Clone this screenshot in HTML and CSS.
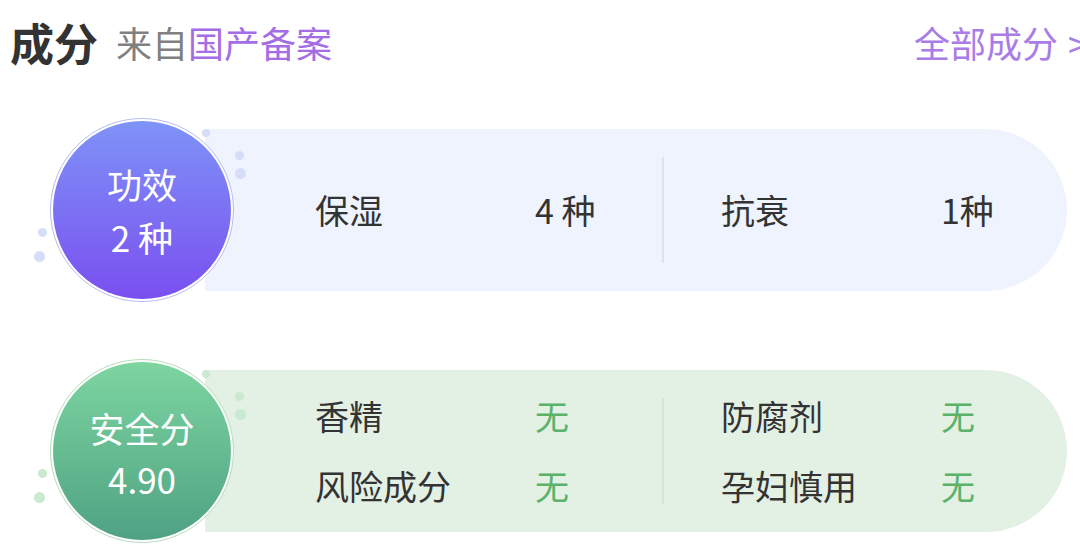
FILE: index.html
```html
<!DOCTYPE html>
<html lang="zh-CN">
<head>
    <meta charset="UTF-8">
    <meta name="viewport" content="width=device-width, initial-scale=1.0">
    <title>成分</title>
    <link rel="stylesheet" href="styles.css">
</head>
<body>

    <!-- Header -->
    <div class="header">
        <div class="title">
            <span class="title-main">成分</span>
            <span class="title-sub">来自<span class="purple">国产备案</span></span>
        </div>
        <a class="all-link">全部成分 <span class="arrow">&gt;</span></a>
    </div>

    <!-- Effect card -->
    <div class="card blue">
        <div class="dots">
            <i class="dot d1"></i><i class="dot d2"></i><i class="dot d3"></i>
            <i class="dot d4"></i><i class="dot d5"></i>
        </div>
        <div class="circle">
            <div class="circle-inner">
                <div>功效</div>
                <div>2 种</div>
            </div>
        </div>
        <div class="pill">
            <div class="col">
                <div class="row"><span class="label">保湿</span><span class="value">4 种</span></div>
            </div>
            <div class="divider"></div>
            <div class="col col-right">
                <div class="row"><span class="label">抗衰</span><span class="value">1种</span></div>
            </div>
        </div>
    </div>

    <!-- Safety card -->
    <div class="card green">
        <div class="dots">
            <i class="dot d1"></i><i class="dot d2"></i><i class="dot d3"></i>
            <i class="dot d4"></i><i class="dot d5"></i>
        </div>
        <div class="circle">
            <div class="circle-inner">
                <div>安全分</div>
                <div>4.90</div>
            </div>
        </div>
        <div class="pill">
            <div class="col">
                <div class="row"><span class="label">香精</span><span class="value ok">无</span></div>
                <div class="row"><span class="label">风险成分</span><span class="value ok">无</span></div>
            </div>
            <div class="divider"></div>
            <div class="col col-right">
                <div class="row"><span class="label">防腐剂</span><span class="value ok">无</span></div>
                <div class="row"><span class="label">孕妇慎用</span><span class="value ok">无</span></div>
            </div>
        </div>
    </div>

</body>
</html>
```

FILE: styles.css
```css
body {
    margin: 0;
    background: #ffffff;
    font-family: "Noto Sans CJK SC", "Noto Sans", sans-serif;
    color: #333333;
    overflow: hidden;
}

.header {
    display: flex;
    justify-content: space-between;
    align-items: center;
    height: 84px;
    padding-left: 10px;
    margin-right: -8px;
}

.title {
    display: flex;
    align-items: center;
    gap: 18px;
}

.title-main {
    font-size: 44px;
    font-weight: 700;
    color: #333333;
}

.title-sub {
    font-size: 36px;
    color: #808080;
}

.purple {
    color: #a46de6;
}

.all-link {
    font-size: 36px;
    color: #a97ce8;
}

.arrow {
    margin-left: 2px;
}

/* cards */
.card {
    position: relative;
    display: flex;
    align-items: center;
    margin-left: 50px;
    margin-top: 34px;
}

.card.green {
    margin-top: 57px;
}

.circle {
    position: relative;
    z-index: 2;
    flex: none;
    width: 184px;
    height: 184px;
    border-radius: 50%;
    border: 1px solid #b7bdf2;
    background: #ffffff;
    padding: 2px;
    box-sizing: border-box;
    display: flex;
}

.circle-inner {
    flex: 1;
    border-radius: 50%;
    background: linear-gradient(180deg, #7e93f7 0%, #7a4ff0 100%);
    color: #ffffff;
    font-size: 35px;
    line-height: 53px;
    display: flex;
    flex-direction: column;
    align-items: center;
    justify-content: center;
}

.green .circle {
    border-color: #b6ddb9;
}

.green .circle-inner {
    background: linear-gradient(180deg, #7dd5a0 0%, #4fa283 100%);
    line-height: 51px;
    padding-top: 4px;
}

.pill {
    flex: none;
    width: 862px;
    height: 162px;
    margin-left: -29px;
    border-radius: 0 81px 81px 0;
    background: #eef3fe;
    display: flex;
    align-items: center;
    padding-left: 110px;
    box-sizing: border-box;
    font-size: 34px;
}

.green .pill {
    background: #e3f0e4;
}

.col {
    width: 347px;
    display: flex;
    flex-direction: column;
    gap: 20px;
}

.col-right {
    padding-left: 57px;
    width: auto;
}

.row {
    display: flex;
    align-items: center;
    line-height: 50px;
}

.label {
    width: 220px;
    color: #333333;
}

.value {
    color: #333333;
}

.value.ok {
    color: #5bb26b;
}

.divider {
    width: 2px;
    height: 106px;
    background: #d9e3f5;
}

.green .divider {
    background: #d2e6d4;
}

/* decorative dots */
.dots {
    position: absolute;
    left: 0;
    top: 0;
    width: 0;
    height: 0;
}

.dot {
    position: absolute;
    border-radius: 50%;
    background: #d5ddf9;
}

.green .dot {
    background: #c9eacf;
}

.d1 { left: 152px; top: 11px; width: 8px; height: 8px; }
.d2 { left: 185px; top: 33px; width: 9px; height: 9px; }
.d3 { left: 185px; top: 50px; width: 11px; height: 11px; }
.d4 { left: -12px; top: 110px; width: 9px; height: 9px; }
.d5 { left: -16px; top: 133px; width: 11px; height: 11px; }
```
